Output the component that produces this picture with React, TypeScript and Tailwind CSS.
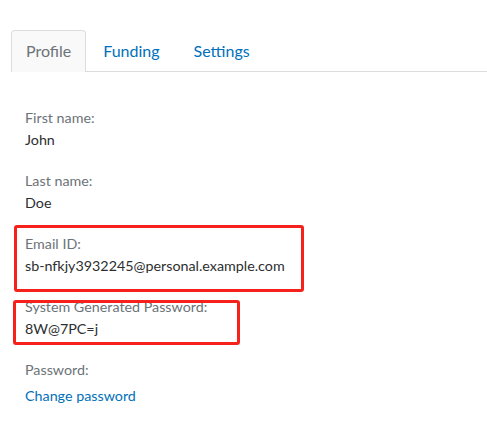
const Field = ({ label, value, link }: { label: string; value: string; link?: boolean }) => (
  <div className="flex flex-col">
    <span className="text-[14.3px] leading-[22px] text-[#6c7378]">{label}</span>
    {link ? (
      <a href="#" className="mt-[4px] text-[14.3px] leading-[22px] text-[#0070ba]">
        {value}
      </a>
    ) : (
      <span className="text-[14.3px] leading-[22px] text-[#2c2e2f]">{value}</span>
    )}
  </div>
);

const App = () => {
  return (
    <div className="relative h-[427px] w-[487px] bg-white font-['Lato','Open_Sans',sans-serif]">
      <div className="ml-[11px] flex border-b border-[#dcdcdc] pt-[30px]">
        <div className="-mb-px rounded-t-[4px] border border-b-0 border-[#dcdcdc] bg-[#f9f9f9] px-[14px] pb-[10px] pt-[9px] text-[16px] leading-[21px] text-[#6c7378]">
          Profile
        </div>
        <div className="px-[17px] pb-[10px] pt-[10px] text-[16px] leading-[21px] text-[#0070ba]">Funding</div>
        <div className="px-[17px] pb-[10px] pt-[10px] text-[16px] leading-[21px] text-[#0070ba]">Settings</div>
      </div>

      <div className="flex flex-col gap-[19px] pl-[25px] pt-[35px]">
        <Field label="First name:" value="John" />
        <Field label="Last name:" value="Doe" />
        <Field label="Email ID:" value="sb-nfkjy3932245@personal.example.com" />
        <Field label="System Generated Password:" value="8W@7PC=j" />
        <Field label="Password:" value="Change password" link />
      </div>

      <div className="absolute left-[14px] top-[225px] h-[67px] w-[290px] rounded-[3px] border-[3px] border-[#f5211a]" />
      <div className="absolute left-[13px] top-[300px] h-[45px] w-[227px] rounded-[3px] border-[3px] border-[#f5211a]" />
    </div>
  );
};

export default App;
